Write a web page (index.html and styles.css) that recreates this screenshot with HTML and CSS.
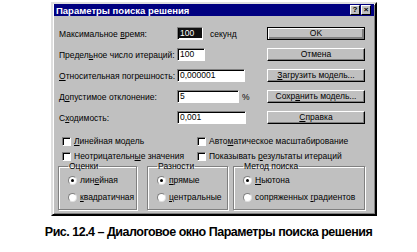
FILE: index.html
```html
<!DOCTYPE html>
<html lang="ru">
<head>
    <meta charset="UTF-8">
    <meta name="viewport" content="width=device-width, initial-scale=1.0">
    <title>Параметры поиска решения</title>
    <link rel="stylesheet" href="styles.css">
</head>
<body>
    <div class="dialog">
        <div class="titlebar">
            <span class="title">Параметры поиска решения</span>
            <div class="tb-buttons">
                <span class="tb-btn">?</span>
                <span class="tb-btn">×</span>
            </div>
        </div>

        <div class="content">
            <div class="top">
                <div class="fields">
                    <div class="field">
                        <span class="label">Максимальное <u>в</u>ремя:</span>
                        <span class="input w-time"><span class="hl">100</span></span>
                        <span class="unit">секунд</span>
                    </div>
                    <div class="field">
                        <span class="label">Предел<u>ь</u>ное число итераций:</span>
                        <span class="input w-iter">100</span>
                    </div>
                    <div class="field">
                        <span class="label"><u>О</u>тносительная погрешность:</span>
                        <span class="input w-prec">0,000001</span>
                    </div>
                    <div class="field">
                        <span class="label">Д<u>о</u>пустимое отклонение:</span>
                        <span class="input w-tol">5</span>
                        <span class="unit pct">%</span>
                    </div>
                    <div class="field">
                        <span class="label">С<u>х</u>одимость:</span>
                        <span class="input w-conv">0,001</span>
                    </div>
                </div>

                <div class="buttons">
                    <div class="btn default">OK</div>
                    <div class="btn">Отмена</div>
                    <div class="btn"><u>З</u>агрузить модель...</div>
                    <div class="btn">Сохр<u>а</u>нить модель...</div>
                    <div class="btn"><u>С</u>правка</div>
                </div>
            </div>

            <div class="checks">
                <div class="check"><span class="box"></span><span><u>Л</u>инейная модель</span></div>
                <div class="check"><span class="box"></span><span>Авто<u>м</u>атическое масштабирование</span></div>
                <div class="check"><span class="box"></span><span>Неотрицательн<u>ы</u>е значения</span></div>
                <div class="check"><span class="box"></span><span>Показывать <u>р</u>езультаты итераций</span></div>
            </div>

            <div class="groups">
                <fieldset class="group g-est">
                    <legend>Оценки</legend>
                    <div class="radio"><span class="dot on"></span><span>лин<u>е</u>йная</span></div>
                    <div class="radio"><span class="dot"></span><span><u>к</u>вадратичная</span></div>
                </fieldset>
                <fieldset class="group g-diff">
                    <legend>Разности</legend>
                    <div class="radio"><span class="dot on"></span><span><u>п</u>рямые</span></div>
                    <div class="radio"><span class="dot"></span><span><u>ц</u>ентральные</span></div>
                </fieldset>
                <fieldset class="group g-method">
                    <legend>Метод поиска</legend>
                    <div class="radio"><span class="dot on"></span><span><u>Н</u>ьютона</span></div>
                    <div class="radio"><span class="dot"></span><span>сопряженных <u>г</u>радиентов</span></div>
                </fieldset>
            </div>
        </div>
    </div>

    <p class="caption">Рис. 12.4 – Диалоговое окно Параметры поиска решения</p>
</body>
</html>
```

FILE: styles.css
```css
body {
    margin: 0;
    padding: 2px 0 0 0;
    background-color: #fff;
    font-family: "Liberation Sans", Arial, sans-serif;
    font-size: 8.5px;
    color: #000;
}

u {
    text-decoration-thickness: 1px;
}

.dialog {
    margin-left: 51px;
    width: 322px;
    height: 210px;
    background-color: #c0c0c0;
    border: 2px solid;
    border-color: #dfdfdf #000 #000 #dfdfdf;
    box-shadow: inset 1px 1px 0 #fff, inset -1px -1px 0 #808080;
}

.titlebar {
    display: flex;
    align-items: center;
    justify-content: space-between;
    height: 12px;
    margin: 0 1px;
    padding: 0 3px 0 2px;
    background-color: #000080;
    color: #fff;
}

.title {
    font-weight: bold;
    font-size: 9.5px;
}

.tb-buttons {
    display: flex;
    gap: 1px;
}

.tb-btn {
    width: 8px;
    height: 8px;
    line-height: 8px;
    background-color: #c0c0c0;
    color: #000;
    font-weight: bold;
    font-size: 8px;
    text-align: center;
    border: 1px solid;
    border-color: #fff #000 #000 #fff;
}

.content {
    padding: 11px 10px 0 5px;
}

.top {
    display: flex;
    justify-content: space-between;
}

.fields,
.buttons {
    display: flex;
    flex-direction: column;
    gap: 8px;
}

.field {
    display: flex;
    align-items: center;
    height: 13px;
    padding-left: 1px;
}

.label {
    width: 118px;
}

.input {
    box-sizing: border-box;
    height: 13px;
    padding: 1px 2px;
    line-height: 9px;
    background-color: #fff;
    border: 1px solid;
    border-color: #808080 #fff #fff #808080;
    box-shadow: inset 1px 1px 0 #000;
}

.hl {
    display: block;
    margin: -1px -2px 0 -1px;
    padding: 1px 1px 0 1px;
    height: 9px;
    background-color: #101010;
    color: #fff;
}

.w-time { width: 26px; }
.w-iter { width: 28px; }
.w-prec { width: 68px; }
.w-tol  { width: 62px; }
.w-conv { width: 69px; }

.unit {
    margin-left: 7px;
}

.unit.pct {
    margin-left: 3px;
}

.btn {
    box-sizing: border-box;
    width: 98px;
    height: 13px;
    line-height: 11px;
    text-align: center;
    border: 1px solid;
    border-color: #fff #000 #000 #fff;
    box-shadow: inset -1px -1px 0 #808080;
}

.btn.default {
    border: 1px solid #000;
    box-shadow: inset 1px 1px 0 #fff, inset -2px -2px 0 #808080;
}

.checks {
    display: grid;
    grid-template-columns: 135px auto;
    row-gap: 5px;
    margin-top: 12px;
    padding-left: 4px;
}

.check {
    display: flex;
    align-items: center;
    height: 10px;
}

.box {
    box-sizing: border-box;
    width: 9px;
    height: 9px;
    margin-right: 3px;
    background-color: #fff;
    border: 1px solid;
    border-color: #808080 #fff #fff #808080;
    box-shadow: inset 1px 1px 0 #000;
}

.groups {
    display: flex;
    margin-top: 1px;
}

.group {
    box-sizing: border-box;
    height: 48px;
    margin: 0;
    padding: 4px 0 0 9px;
    border: 1px solid #808080;
    box-shadow: 1px 1px 0 #fff, inset 1px 1px 0 #fff;
    display: flex;
    flex-direction: column;
    gap: 7px;
}

.group legend {
    padding: 0 1px;
    margin-left: 0;
    line-height: 9px;
}

.g-est    { width: 79px; }
.g-diff   { width: 81px; margin-left: 10px; }
.g-method { width: 132px; margin-left: 5px; }

.radio {
    display: flex;
    align-items: center;
    height: 10px;
}

.dot {
    box-sizing: border-box;
    width: 9px;
    height: 9px;
    margin-right: 3px;
    border-radius: 50%;
    background-color: #fff;
    border: 1px solid;
    border-color: #808080 #dfdfdf #dfdfdf #808080;
    display: flex;
    align-items: center;
    justify-content: center;
}

.dot.on::after {
    content: "";
    width: 3px;
    height: 3px;
    border-radius: 50%;
    background-color: #000;
}

.caption {
    margin: 9px 0 0 0;
    text-align: center;
    font-family: "Liberation Sans Narrow", "Liberation Sans", Arial, sans-serif;
    font-weight: bold;
    font-size: 12.5px;
    letter-spacing: -0.5px;
}
```
